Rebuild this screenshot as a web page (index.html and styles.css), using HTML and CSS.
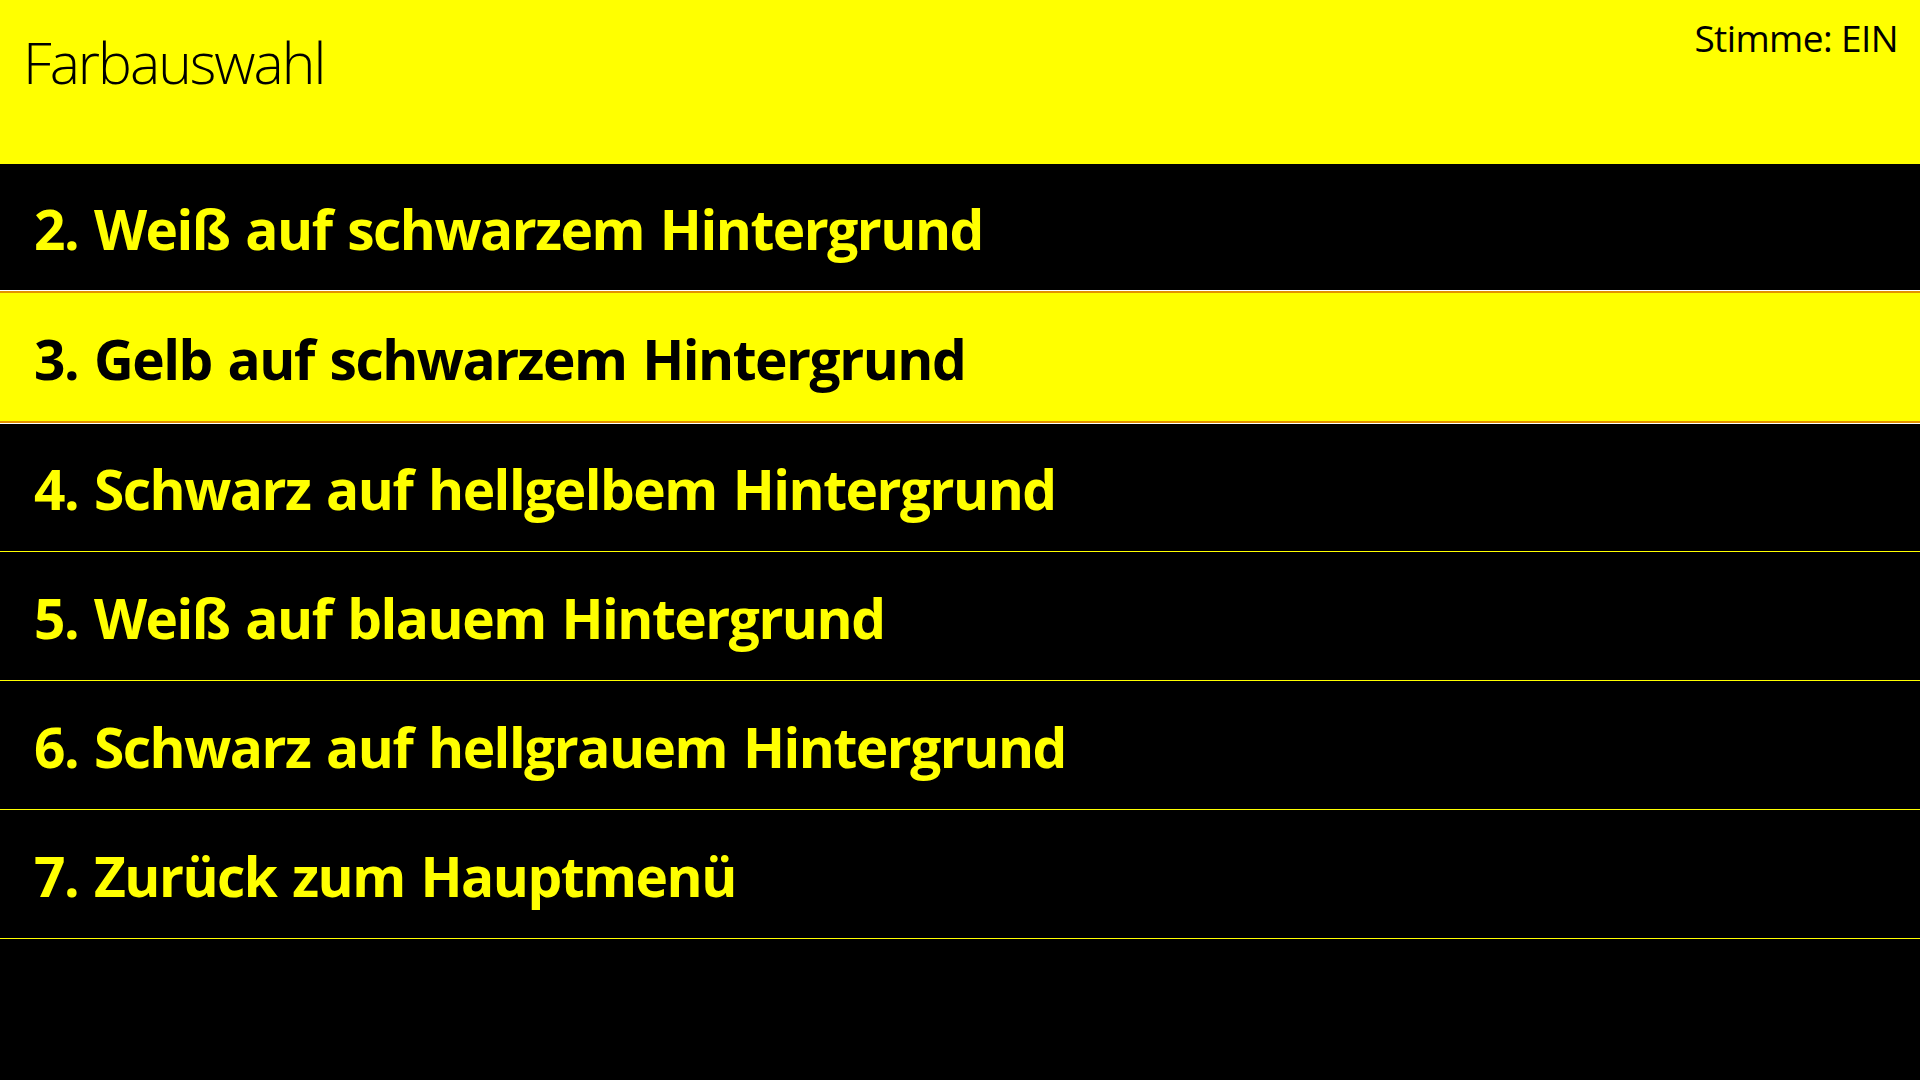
FILE: index.html
```html
<!DOCTYPE html>
<html lang="de">
<head>
<meta charset="utf-8">
<title>Farbauswahl</title>
<link rel="stylesheet" href="styles.css">
</head>
<body>
<header class="header">
  <h1 class="title">Farbauswahl</h1>
  <div class="voice">Stimme: EIN</div>
</header>
<ul class="menu">
  <li class="item item-first">2. Weiß auf schwarzem Hintergrund</li>
  <li class="item item-active">3. Gelb auf schwarzem Hintergrund</li>
  <li class="item">4. Schwarz auf hellgelbem Hintergrund</li>
  <li class="item">5. Weiß auf blauem Hintergrund</li>
  <li class="item">6. Schwarz auf hellgrauem Hintergrund</li>
  <li class="item">7. Zurück zum Hauptmenü</li>
</ul>
</body>
</html>
```

FILE: styles.css
```css
html, body {
  margin: 0;
  padding: 0;
  background: #000;
  height: 100%;
}
body {
  font-family: "Open Sans", "Noto Sans", sans-serif;
  overflow: hidden;
}
.header {
  height: 164px;
  background: #ffff00;
  display: flex;
  justify-content: space-between;
  align-items: flex-start;
  box-sizing: border-box;
}
.title {
  margin: 0;
  padding: 34px 0 0 23px;
  font-size: 57px;
  font-weight: 300;
  line-height: 1;
  color: #000;
  letter-spacing: -2px;
}
.voice {
  padding: 19px 22px 0 0;
  font-size: 37px;
  line-height: 1;
  color: #000;
  letter-spacing: -0.6px;
}
.menu {
  list-style: none;
  margin: 0;
  padding: 0;
}
.item {
  border-bottom: 1px solid #ffff00;
  display: flex;
  align-items: center;
  box-sizing: content-box;
  padding: 2px 0 0 34px;
  height: 126px;
  font-size: 55px;
  font-weight: 700;
  line-height: 1;
  letter-spacing: -1.5px;
  word-spacing: 3px;
  color: #ffff00;
  background: #000;
}
.item-first {
  height: 124px;
  border-bottom: 1px solid #ffffff;
}
.item-active {
  height: 126px;
  background: #ffff00;
  color: #000;
  border-top: 2px solid #e39200;
  border-bottom: 2px solid #e39200;
  box-shadow: 0 1px 0 #ffffff;
  position: relative;
}
```
